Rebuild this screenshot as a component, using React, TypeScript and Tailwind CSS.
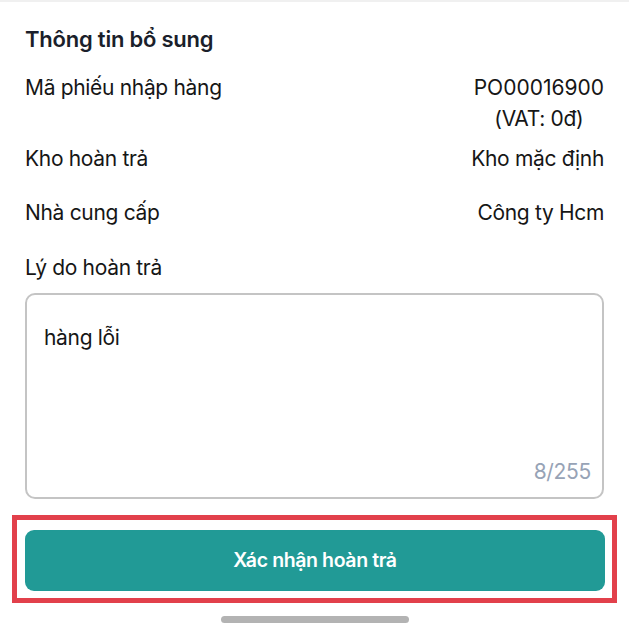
export default function App() {
  const rows = [
    { label: "Kho hoàn trả", value: "Kho mặc định", gap: "mt-[9px]" },
    { label: "Nhà cung cấp", value: "Công ty Hcm", gap: "mt-[23px]" },
  ];

  return (
    <div
      className="w-[629px] h-[632px] bg-white overflow-hidden text-[#161616] flex flex-col tracking-[-0.02em]"
      style={{ fontFamily: "Inter, 'Noto Sans', sans-serif" }}
    >
      <div className="h-[2px] bg-[#f0f0f0]" />

      <div className="px-[25px]">
        <h2 className="mt-[23px] text-[22px] leading-[29px] font-semibold text-[#1b1f2b] tracking-[-0.01em]">Thông tin bổ sung</h2>

        {/* info rows */}
        <div className="mt-[18px] flex justify-between text-[21px] leading-[31px]">
          <span>Mã phiếu nhập hàng</span>
          <div className="flex flex-col items-center">
            <span className="tracking-normal">PO00016900</span>
            <span>(VAT: 0đ)</span>
          </div>
        </div>

        {rows.map((r) => (
          <div key={r.label} className={`${r.gap} flex justify-between text-[21px] leading-[31px]`}>
            <span>{r.label}</span>
            <span>{r.value}</span>
          </div>
        ))}

        <div className="mt-[24px] text-[21px] leading-[31px]">Lý do hoàn trả</div>

        {/* reason box */}
        <div className="mt-[10px] h-[206px] rounded-[10px] border-2 border-[#c4c4c4] flex flex-col justify-between pl-[17px] pr-[11px] pt-[27px] pb-[11px]">
          <span className="text-[21px] leading-[31px]">hàng lỗi</span>
          <span className="self-end text-[21px] leading-[28px] text-[#97a3b6]">8/255</span>
        </div>
      </div>

      {/* confirm button */}
      <div className="mt-[16px] mx-[12px] border-[5px] border-[#e2404b] pl-[8px] pr-[7px] pt-[10px] pb-[7px]">
        <button className="w-full h-[61px] rounded-[9px] bg-[#219a96] text-white text-[19.5px] font-semibold tracking-[-0.02em]">
          Xác nhận hoàn trả
        </button>
      </div>

      <div className="mt-[13px] self-center w-[188px] h-[7px] rounded-full bg-[#b3b3b3]" />
    </div>
  );
}
